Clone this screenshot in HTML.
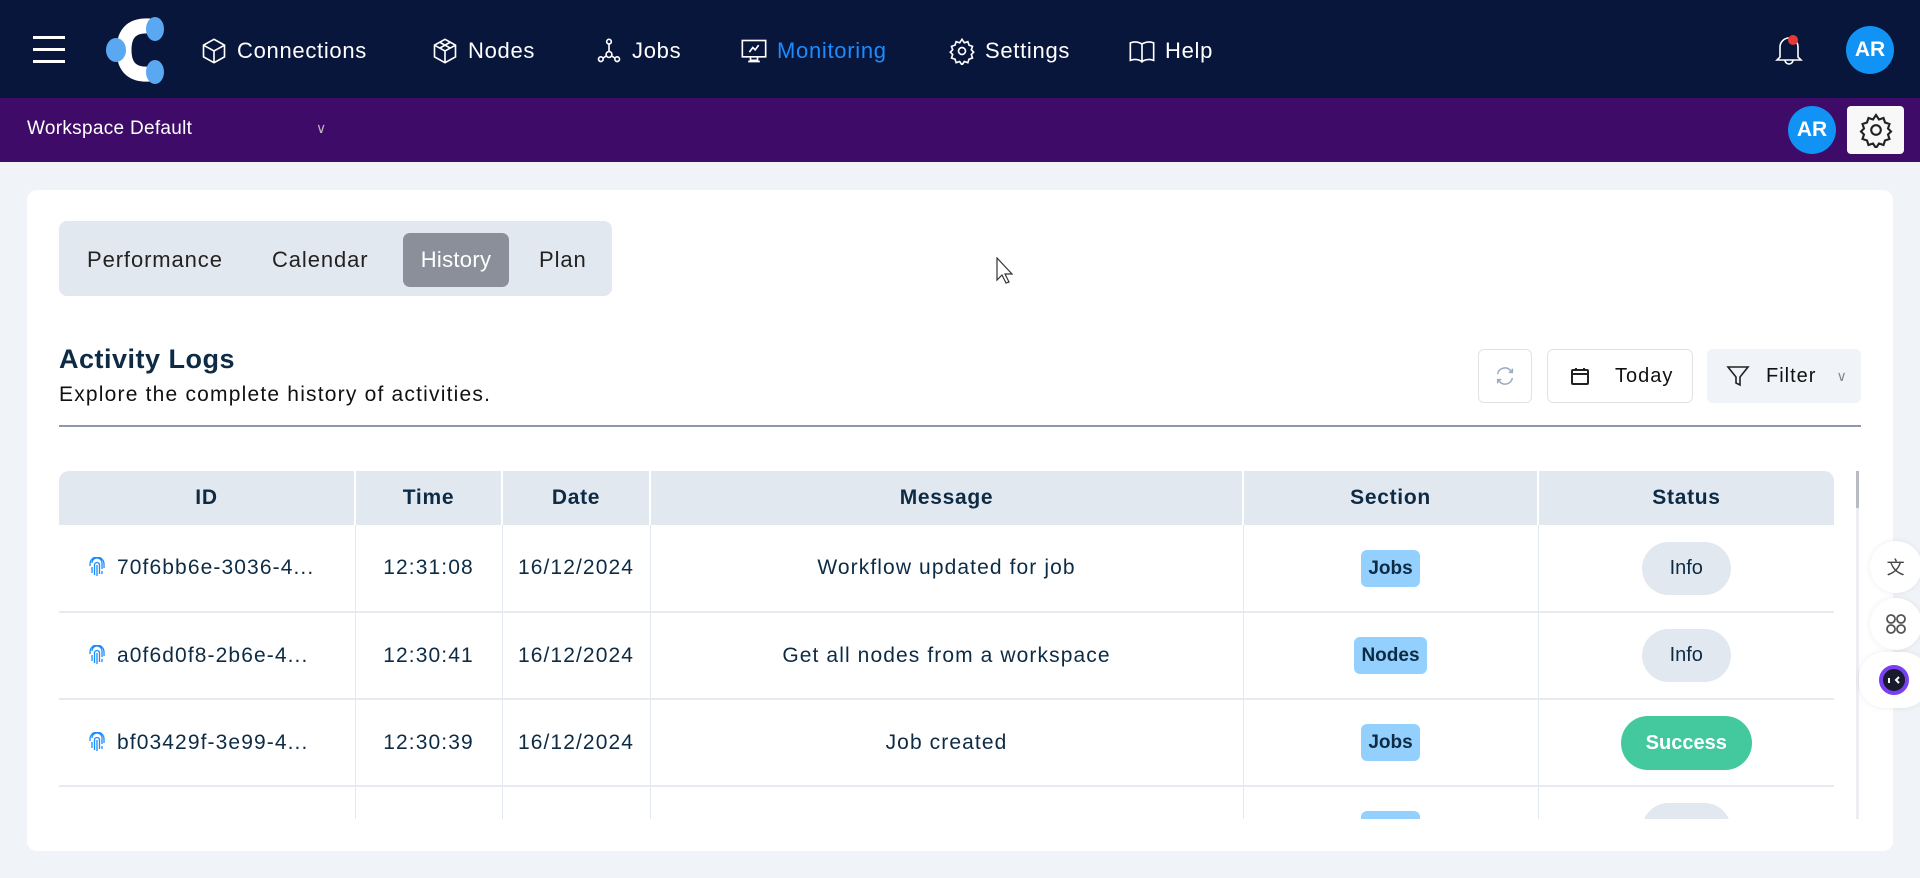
<!DOCTYPE html>
<html><head><meta charset="utf-8"><style>
*{box-sizing:border-box;margin:0;padding:0}
body{width:1920px;height:878px;overflow:hidden;background:#f0f3f7;font-family:"Liberation Sans",sans-serif;color:#0d2b45;position:relative;letter-spacing:0.7px}
.top{position:absolute;left:0;top:0;width:1920px;height:98px;background:#09163b}
.nav{position:absolute;top:37px;font-size:22px;color:#fff;display:flex;align-items:center;gap:9px}
.nav svg{width:28px;height:28px}
.purple{position:absolute;left:0;top:98px;width:1920px;height:64px;background:#3f0b68}
.av{position:absolute;width:48px;height:48px;border-radius:50%;background:#1192f5;color:#fff;font-weight:bold;font-size:21px;display:flex;align-items:center;justify-content:center;letter-spacing:0}
.card{position:absolute;left:27px;top:190px;width:1866px;height:661px;background:#fff;border-radius:10px}
.tabs{position:absolute;left:59px;top:221px;width:553px;height:75px;background:#e2e8f0;border-radius:8px}
.tab{position:absolute;top:12px;height:54px;line-height:54px;font-size:22px;color:#222;letter-spacing:0.9px}
.btn{position:absolute;top:349px;height:54px;border:1px solid #dfe3e8;border-radius:6px;display:flex;align-items:center;font-size:20px;color:#111}
table{border-collapse:collapse;position:absolute;left:59px;top:471px;width:1775px;table-layout:fixed}
th{background:#e2e8f0;height:54px;font-size:21px;font-weight:bold;color:#0d2b45;border-right:2px solid #fff}
th:last-child{border-right:none}
td{height:87px;text-align:center;font-size:21px;border-right:1px solid #e2e8f0;border-bottom:2px solid #e6ebf1;color:#0d2b45;letter-spacing:1.1px}
td:last-child{border-right:none}
.bd{display:inline-block;background:#93d0fd;border-radius:6px;padding:0 7px;height:37px;line-height:37px;font-weight:bold;font-size:19px;letter-spacing:0}
.pi{display:inline-block;background:#e2e8f0;border-radius:27px;width:89px;height:53px;line-height:53px;font-size:20px;letter-spacing:0}
.ok{display:inline-block;background:#44c99e;color:#fff;border-radius:27px;width:131px;height:54px;line-height:54px;font-size:20px;font-weight:bold;letter-spacing:0}
.idc{text-align:left;padding-left:30px}
.idc svg{vertical-align:-3px;margin-right:12px}
.side{position:absolute;left:1870px;width:52px;height:52px;border-radius:26px;background:#fff;box-shadow:0 0 6px rgba(0,0,0,.08);display:flex;align-items:center;justify-content:center}
</style></head><body>
<div class="top">
 <div style="position:absolute;left:33px;top:36px;width:32px">
  <div style="height:3px;background:#fff;margin-bottom:9px"></div><div style="height:3px;background:#fff;margin-bottom:9px"></div><div style="height:3px;background:#fff"></div></div>
 <svg style="position:absolute;left:100px;top:16px" width="70" height="68" viewBox="0 0 70 68">
  <path d="M50 10 Q24 8 24 34 Q24 60 50 58" stroke="#fff" stroke-width="15" fill="none"/>
  <ellipse cx="55" cy="13" rx="9" ry="12" fill="#5aa8f2"/><ellipse cx="16" cy="34" rx="10" ry="12" fill="#5aa8f2"/><ellipse cx="55" cy="56" rx="9" ry="12" fill="#5aa8f2"/></svg>
 <div class="nav" style="left:200px"><svg viewBox="0 0 24 24" fill="none" stroke="#fff" stroke-width="1.4"><path d="M12 2 3 7v10l9 5 9-5V7z M3 7l9 5 9-5 M12 12v10"/></svg>Connections</div>
 <div class="nav" style="left:431px"><svg viewBox="0 0 24 24" fill="none" stroke="#fff" stroke-width="1.4"><path d="M12 2 3 7v10l9 5 9-5V7z M3 7l9 5 9-5 M12 12v10 M7.5 4.5l9 5 M16.5 4.5l-9 5"/></svg>Nodes</div>
 <div class="nav" style="left:595px"><svg viewBox="0 0 24 24" fill="none" stroke="#fff" stroke-width="1.4"><circle cx="12" cy="4" r="2"/><circle cx="5" cy="19" r="2"/><circle cx="19" cy="19" r="2"/><circle cx="12" cy="15" r="2.5"/><path d="M12 6v6.5 M7 18l3-2 M17 18l-3-2"/></svg>Jobs</div>
 <div class="nav" style="left:740px;color:#1a8cff"><svg viewBox="0 0 24 24" fill="none" stroke="#fff" stroke-width="1.4"><rect x="2" y="3" width="20" height="14"/><path d="M9 17v3h6v-3 M7 21h10 M8 13l3-4 2 2 3-4"/></svg>Monitoring</div>
 <div class="nav" style="left:948px"><svg viewBox="0 0 24 24" fill="none" stroke="#fff" stroke-width="1.4"><circle cx="12" cy="12" r="3"/><path d="M12 2l2 3 3-1 1 3 3 1-1 3 2 2-2 2 1 3-3 1-1 3-3-1-2 3-2-3-3 1-1-3-3-1 1-3-2-2 2-2-1-3 3-1 1-3 3 1z"/></svg>Settings</div>
 <div class="nav" style="left:1128px"><svg viewBox="0 0 24 24" fill="none" stroke="#fff" stroke-width="1.4"><path d="M2 5q5-2 10 1v15q-5-3-10-1z M22 5q-5-2-10 1v15q5-3 10-1z"/></svg>Help</div>
 <svg style="position:absolute;left:1774px;top:33px" width="30" height="32" viewBox="0 0 30 32" fill="none" stroke="#fff" stroke-width="1.6"><path d="M6 24V14a9 9 0 0118 0v10l3 3H3z M11 27a4 4 0 008 0"/><circle cx="19" cy="7" r="5" fill="#e53935" stroke="none"/></svg>
 <div class="av" style="left:1846px;top:26px">AR</div>
</div>
<div class="purple">
 <div style="position:absolute;left:27px;top:20px;color:#fff;font-size:19px;letter-spacing:0.3px">Workspace Default</div>
 <div style="position:absolute;left:316px;top:22px;color:#bbb;font-size:14px">&#8744;</div>
 <div class="av" style="left:1788px;top:8px">AR</div>
 <div style="position:absolute;left:1847px;top:8px;width:57px;height:48px;background:#f8f8f8;border-radius:4px;display:flex;align-items:center;justify-content:center">
 <svg width="36" height="36" viewBox="0 0 24 24" fill="none" stroke="#222" stroke-width="1.4"><circle cx="12" cy="12" r="3.2"/><path d="M12 2l2 3 3-1 1 3 3 1-1 3 2 2-2 2 1 3-3 1-1 3-3-1-2 3-2-3-3 1-1-3-3-1 1-3-2-2 2-2-1-3 3-1 1-3 3 1z"/></svg></div>
</div>
<div class="card"></div>
<div class="tabs">
 <div class="tab" style="left:28px">Performance</div>
 <div class="tab" style="left:213px">Calendar</div>
 <div class="tab" style="left:344px;width:106px;background:#8a8f99;color:#fff;border-radius:7px;text-align:center;letter-spacing:0.3px">History</div>
 <div class="tab" style="left:480px">Plan</div>
</div>
<svg style="position:absolute;left:996px;top:257px" width="20" height="28" viewBox="0 0 20 28"><path d="M1 1v22l5-5 4 8 3-1-4-8h7z" fill="#fff" stroke="#333" stroke-width="1.2"/></svg>
<div style="position:absolute;left:59px;top:344px;font-size:27px;font-weight:bold;color:#0d2b45;letter-spacing:0.5px">Activity Logs</div>
<div style="position:absolute;left:59px;top:383px;font-size:21px;color:#111;letter-spacing:1.2px">Explore the complete history of activities.</div>
<div style="position:absolute;left:59px;top:425px;width:1802px;height:2px;background:#8d98ad"></div>
<div class="btn" style="left:1478px;width:54px;justify-content:center"><svg width="22" height="22" viewBox="0 0 24 24" fill="none" stroke="#9aa8bd" stroke-width="1.6"><path d="M4 10a8 8 0 0114-4l2 2 M20 4v4h-4 M20 14a8 8 0 01-14 4l-2-2 M4 20v-4h4"/></svg></div>
<div class="btn" style="left:1547px;width:146px"><svg style="margin-left:22px" width="20" height="20" viewBox="0 0 20 20" fill="none" stroke="#222" stroke-width="2"><rect x="2" y="4" width="16" height="14" rx="1"/><path d="M2 8h16 M6 2v3 M14 2v3"/></svg><span style="margin-left:25px;letter-spacing:1px">Today</span></div>
<div class="btn" style="left:1707px;width:154px;background:#f0f3f7;border-color:#f0f3f7"><svg style="margin-left:18px" width="24" height="24" viewBox="0 0 24 24" fill="none" stroke="#222" stroke-width="1.6"><path d="M2 3h20l-8 10v8l-4-2v-6z"/></svg><span style="margin-left:16px;letter-spacing:1px">Filter</span><span style="margin-left:20px;color:#888;font-size:14px">&#8744;</span></div>
<div style="position:absolute;left:59px;top:471px;width:1775px;height:348px;overflow:hidden;border-radius:10px 10px 0 0">
<table style="left:0;top:0">
<colgroup><col style="width:296px"><col style="width:147px"><col style="width:148px"><col style="width:593px"><col style="width:295px"><col style="width:296px"></colgroup>
<tr><th>ID</th><th>Time</th><th>Date</th><th>Message</th><th>Section</th><th>Status</th></tr>
<tr><td class="idc"><svg width="16" height="20" viewBox="0 0 16 20" fill="none" stroke="#1a8cff" stroke-width="1.3"><path d="M3 6a5 5 0 0110 0v6 M1 9V7a7 7 0 0114 0v4 M5.5 18V8a2.5 2.5 0 015 0v9 M8 8v11 M3 10v6 M13 14v3"/></svg>70f6bb6e-3036-4...</td><td>12:31:08</td><td>16/12/2024</td><td>Workflow updated for job</td><td><span class="bd">Jobs</span></td><td><span class="pi">Info</span></td></tr>
<tr><td class="idc"><svg width="16" height="20" viewBox="0 0 16 20" fill="none" stroke="#1a8cff" stroke-width="1.3"><path d="M3 6a5 5 0 0110 0v6 M1 9V7a7 7 0 0114 0v4 M5.5 18V8a2.5 2.5 0 015 0v9 M8 8v11 M3 10v6 M13 14v3"/></svg>a0f6d0f8-2b6e-4...</td><td>12:30:41</td><td>16/12/2024</td><td>Get all nodes from a workspace</td><td><span class="bd">Nodes</span></td><td><span class="pi">Info</span></td></tr>
<tr><td class="idc"><svg width="16" height="20" viewBox="0 0 16 20" fill="none" stroke="#1a8cff" stroke-width="1.3"><path d="M3 6a5 5 0 0110 0v6 M1 9V7a7 7 0 0114 0v4 M5.5 18V8a2.5 2.5 0 015 0v9 M8 8v11 M3 10v6 M13 14v3"/></svg>bf03429f-3e99-4...</td><td>12:30:39</td><td>16/12/2024</td><td>Job created</td><td><span class="bd">Jobs</span></td><td><span class="ok">Success</span></td></tr>
<tr><td class="idc">&nbsp;</td><td>12:30:30</td><td>16/12/2024</td><td>&nbsp;</td><td><span class="bd">Jobs</span></td><td><span class="pi">Info</span></td></tr>
</table></div>
<div style="position:absolute;left:1856px;top:471px;width:3px;height:348px;background:#eceef1"></div>
<div style="position:absolute;left:1856px;top:471px;width:3px;height:37px;background:#b8bcc2"></div>
<div class="side" style="top:541px;font-size:18px;color:#444">&#25991;</div>
<div class="side" style="top:598px"><svg width="22" height="22" viewBox="0 0 22 22" fill="none" stroke="#555" stroke-width="1.8"><circle cx="6" cy="6" r="4"/><circle cx="16" cy="6" r="4"/><circle cx="6" cy="16" r="4"/><circle cx="16" cy="16" r="4"/></svg></div>
<div class="side" style="top:652px;left:1859px;width:70px;height:56px"><svg width="32" height="32" viewBox="0 0 32 32"><circle cx="16" cy="16" r="13" fill="#1a1a2e" stroke="#7b3ff2" stroke-width="4"/><rect x="10" y="14" width="2" height="5" fill="#fff"/><path d="M21 13l-3 3 3 3" stroke="#fff" stroke-width="2" fill="none"/></svg></div>
</body></html>
